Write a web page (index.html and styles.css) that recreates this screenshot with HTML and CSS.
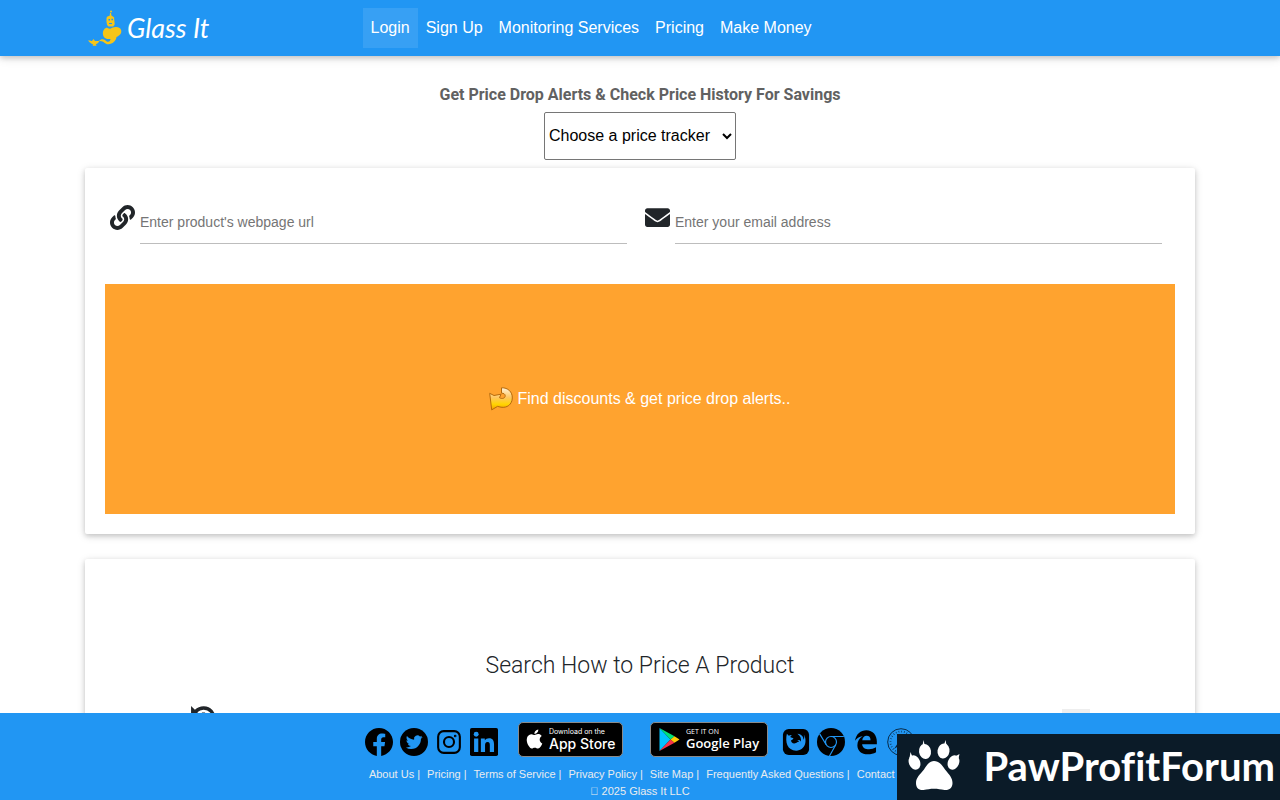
FILE: index.html
```html
<!DOCTYPE html>
<html lang="en">
<head>
<meta charset="utf-8">
<meta name="viewport" content="width=device-width, initial-scale=1">
<title>Glass It - Price Drop Alerts</title>
<link rel="stylesheet" href="styles.css">
</head>
<body>
<header class="navbar">
  <div class="container navbar-inner">
    <a class="brand" href="#">
      <svg class="genie" viewBox="0 0 36 36" fill="#f5c518" aria-hidden="true">
        <circle cx="23" cy="1.500" r="1"/><path d="M22 3h1l.6 3h-2z"/>
        <path d="M18.500 8c.5-2.500 6-3 7.500-.5l.7 6.500c-.5 2-1.500 2.500-2.500 2.500h-3.500c-1.500-.5-2.500-3-2.200-8.500z"/>
        <path d="M19 17.500c1 1 3 1.800 5 .3 3-1.300 8-1.500 9 2 1.300 3.500-1.500 6-4.500 7.200-.5 4-4 7-8 7.300-4 .2-4-3.800-9.500-3.300 2-2.500 5.500-2.200 7.500.3 2 1.400 4-.2 4-2.300-3 .5-6.500-.5-7.300-3.500-1-4 .5-7 3.800-8z"/>
        <path d="M0 30.500c2-.4 3 .3 4 .5l1.500-2 1.500 2h4.500c-1.500 2.500-2.800 3-3.800 3.400l1 1.300H4.500l.8-1.300C3.500 34 1.800 32.500 0 30.500z"/>
        <path d="M20.500 9h1.500v1.400h-1.500zM23.500 8.800h1.500v1.400h-1.500zM21 13h3v1h-3z" fill="#2196f3"/>
      </svg>
      <span class="brand-name">Glass It</span>
    </a>
    <nav class="nav">
      <a class="nav-link active" href="#">Login</a>
      <a class="nav-link" href="#">Sign Up</a>
      <a class="nav-link" href="#">Monitoring Services</a>
      <a class="nav-link" href="#">Pricing</a>
      <a class="nav-link" href="#">Make Money</a>
    </nav>
  </div>
</header>

<main class="container page">
  <div class="intro">
    <h1 class="title">Get Price Drop Alerts &amp; Check Price History For Savings</h1>
    <select class="tracker" aria-label="Choose a price tracker"><option>Choose a price tracker</option></select>
  </div>

  <form class="card">
    <div class="fields">
      <div class="field">
        <label for="url" aria-label="Product url"><svg class="field-icon" viewBox="0 0 512 512" aria-hidden="true"><path d="M326.612 185.391c59.747 59.809 58.927 155.698.36 214.590-.11.12-.24.25-.36.37l-67.200 67.200c-59.270 59.270-155.699 59.262-214.960 0-59.270-59.260-59.270-155.700 0-214.960l37.106-37.106c9.840-9.840 26.786-3.300 27.294 10.606.648 17.722 3.826 35.527 9.690 52.721 1.986 5.822.567 12.262-3.783 16.612l-13.087 13.087c-28.026 28.026-28.905 73.660-1.155 101.960 28.024 28.579 74.086 28.749 102.325.51l67.200-67.190c28.191-28.191 28.073-73.757 0-101.830-3.701-3.694-7.429-6.564-10.341-8.569a16.037 16.037 0 0 1-6.947-12.606c-.396-10.567 3.348-21.456 11.698-29.806l21.054-21.055c5.521-5.521 14.182-6.199 20.584-1.731a152.482 152.482 0 0 1 20.522 17.197zM467.547 44.449c-59.261-59.262-155.690-59.270-214.960 0l-67.200 67.200c-.12.12-.25.25-.36.37-58.566 58.892-59.387 154.781.36 214.590a152.454 152.454 0 0 0 20.521 17.196c6.402 4.468 15.064 3.789 20.584-1.731l21.054-21.055c8.350-8.350 12.094-19.239 11.698-29.806a16.037 16.037 0 0 0-6.947-12.606c-2.912-2.005-6.640-4.875-10.341-8.569-28.073-28.073-28.191-73.639 0-101.830l67.200-67.190c28.239-28.239 74.300-28.069 102.325.51 27.750 28.300 26.872 73.934-1.155 101.960l-13.087 13.087c-4.350 4.350-5.769 10.790-3.783 16.612 5.864 17.194 9.042 34.999 9.690 52.721.509 13.906 17.454 20.446 27.294 10.606l37.106-37.106c59.271-59.259 59.271-155.699.001-214.959z"/></svg></label>
        <input class="text-input" id="url" type="text" placeholder="Enter product's webpage url">
      </div>
      <div class="field">
        <label for="email" aria-label="Email"><svg class="field-icon" viewBox="0 0 512 512" aria-hidden="true"><path d="M502.300 190.800c3.900-3.100 9.700-.2 9.700 4.700V400c0 26.500-21.500 48-48 48H48c-26.500 0-48-21.500-48-48V195.600c0-5 5.700-7.800 9.700-4.700 22.400 17.400 52.100 39.500 154.100 113.600 21.100 15.400 56.700 47.800 92.200 47.600 35.700.3 72-32.800 92.300-47.600 102-74.100 131.600-96.300 154-113.700zM256 320c23.200.4 56.600-29.200 73.400-41.400 132.700-96.300 142.800-104.700 173.400-128.700 5.800-4.500 9.200-11.500 9.200-18.900v-19c0-26.500-21.500-48-48-48H48c-26.500 0-48 21.500-48 48v19c0 7.400 3.400 14.300 9.200 18.900 30.600 23.900 40.700 32.400 173.400 128.700 16.800 12.200 50.200 41.800 73.400 41.400z"/></svg></label>
        <input class="text-input" id="email" type="email" placeholder="Enter your email address">
      </div>
    </div>
    <button class="submit" type="button">
      <svg class="arrow" viewBox="0 0 24 24" aria-hidden="true">
        <defs><linearGradient id="gold" x1="0" y1="0" x2="0" y2="1"><stop offset="0" stop-color="#fff3d9"/><stop offset=".45" stop-color="#ffc65c"/><stop offset=".75" stop-color="#ffd400"/><stop offset="1" stop-color="#f39a00"/></linearGradient></defs>
        <path d="M12.500.8C19 .5 23.500 5 23.300 11c-.2 6.500-5.300 10.200-11.300 9.200l-3.500-.8-5.800 3.500L.7 6.300l4.300 2.200 7-1.300-1.500 3.500c2.500 1.600 5.800.6 5.700-2-.1-1.600-1.500-2.500-3.700-2.500z" fill="url(#gold)" stroke="#b56a0c" stroke-linejoin="round"/>
      </svg>
      <span>Find discounts &amp; get price drop alerts..</span>
    </button>
  </form>

  <section class="card search">
    <h2 class="search-title">Search How to Price A Product</h2>
    <div class="search-row">
      <svg class="history" viewBox="0 0 512 512" aria-hidden="true"><path d="M20 20v175h175l-56-56a165 165 0 1 1-20 205l-52 38A230 230 0 1 0 93 92zM226 140v135l90 65 34-46-64-47V140z"/></svg>
      <button class="search-btn" type="button" aria-label="Search"></button>
    </div>
  </section>
</main>

<footer class="footer">
  <div class="footer-icons">
    <div class="icon-group">
      <a href="#" aria-label="Facebook"><svg class="social" viewBox="0 0 24 24"><path d="M24 12.073c0-6.627-5.373-12-12-12s-12 5.373-12 12c0 5.990 4.388 10.954 10.125 11.854v-8.385H7.078v-3.470h3.047V9.430c0-3.007 1.792-4.669 4.533-4.669 1.312 0 2.686.235 2.686.235v2.953H15.830c-1.491 0-1.956.925-1.956 1.874v2.250h3.328l-.532 3.470h-2.796v8.385C19.612 23.027 24 18.062 24 12.073z"/></svg></a>
      <a href="#" aria-label="Twitter"><svg class="social" viewBox="0 0 24 24"><circle cx="12" cy="12" r="12"/><path fill="#2196f3" transform="translate(5 5) scale(.6)" d="M23.953 4.570a10 10 0 01-2.825.775 4.958 4.958 0 002.163-2.723c-.951.555-2.005.959-3.127 1.184a4.920 4.920 0 00-8.384 4.482C7.690 8.095 4.067 6.130 1.640 3.162a4.822 4.822 0 00-.666 2.475c0 1.710.87 3.213 2.188 4.096a4.904 4.904 0 01-2.228-.616v.06a4.923 4.923 0 003.946 4.827 4.996 4.996 0 01-2.212.085 4.936 4.936 0 004.604 3.417 9.867 9.867 0 01-6.102 2.105c-.39 0-.779-.023-1.170-.067a13.995 13.995 0 007.557 2.209c9.053 0 13.998-7.496 13.998-13.985 0-.21 0-.42-.015-.63A9.935 9.935 0 0024 4.590z"/></svg></a>
      <a href="#" aria-label="Instagram"><svg class="social" viewBox="0 0 24 24" fill="none" stroke="#000" stroke-width="1.800"><rect x="2.700" y="2.700" width="18.600" height="18.600" rx="4.800"/><circle cx="12" cy="12" r="4.300"/><circle cx="17.300" cy="6.900" r=".4" stroke-width="1.400"/></svg></a>
      <a href="#" aria-label="LinkedIn"><svg class="social" viewBox="0 0 24 24"><rect width="24" height="24" rx="1.500"/><g fill="#2196f3"><circle cx="5.300" cy="5.300" r="2.100"/><path d="M3.500 9h3.600v11.500H3.500zM9.300 9h3.400v1.600c.8-1.300 2-1.900 3.600-1.900 3.400 0 4.300 2.200 4.300 5.500v6.300H17v-5.600c0-1.700-.2-3-1.900-3-1.800 0-2.200 1.400-2.200 3v5.600H9.300z"/></g></svg></a>
    </div>
    <a class="badge apple" href="#">
      <svg class="apple-logo" viewBox="0 0 24 24" fill="#fff" aria-hidden="true"><path d="M12.152 6.896c-.948 0-2.415-1.078-3.960-1.040-2.040.027-3.910 1.183-4.961 3.014-2.117 3.675-.546 9.103 1.519 12.090 1.013 1.454 2.208 3.090 3.792 3.039 1.520-.065 2.090-.987 3.935-.987 1.831 0 2.350.987 3.960.948 1.637-.026 2.676-1.480 3.676-2.948 1.156-1.688 1.636-3.325 1.662-3.415-.039-.013-3.182-1.221-3.220-4.857-.026-3.040 2.480-4.494 2.597-4.559-1.429-2.090-3.623-2.324-4.390-2.376-2-.156-3.675 1.090-4.610 1.090zM15.530 3.830c.843-1.012 1.400-2.427 1.245-3.830-1.207.052-2.662.805-3.532 1.818-.78.896-1.454 2.338-1.273 3.714 1.338.104 2.715-.688 3.559-1.701"/></svg>
      <span class="badge-text"><small>Download on the</small><b>App Store</b></span>
    </a>
    <a class="badge google" href="#">
      <svg class="play-logo" viewBox="0 0 20 23" aria-hidden="true"><path d="M0 0v23l11-11.500z" fill="#00c3ff"/><path d="M0 0l15 8.200-4 3.300z" fill="#00e27a"/><path d="M0 23l15-8.200-4-3.300z" fill="#f5334a"/><path d="M15 8.200l5 3.300-5 3.300-4-3.300z" fill="#ffcb05"/></svg>
      <span class="badge-text"><small>GET IT ON</small><b>Google Play</b></span>
    </a>
    <div class="icon-group">
      <a href="#" aria-label="Firefox"><svg class="social" viewBox="0 0 24 24"><rect x=".8" y=".8" width="22.400" height="22.400" rx="5"/><path fill="#2196f3" d="M4.200 5l1.600 1.600c1-.7 2-.8 2.800-.6-1 .6-1.500 1.200-1.300 2l2.500.7c-.2 1-1.200 1.200-2 1.800-.2 2.300 2 3.200 4.200 2.400 1.300-.5 1.700-1.200 2.700-1.300-.3-.8-1.200-1-2.200-.6 1.500-1.300 3.200-.5 3.600.7.700-2.500-.4-5-2.900-6.700 4 .3 5.200 3 5.300 5 .7-1 .8-2.500.2-4.200 3 4.500 1.700 13.200-6.500 13.600C4.500 19.400 2.500 12 4.200 5z"/></svg></a>
      <a href="#" aria-label="Chrome"><svg class="social" viewBox="0 0 24 24"><circle cx="12" cy="12" r="12"/><g fill="none" stroke="#2196f3"><circle cx="12" cy="12" r="4.700"/><path d="M12 7.300h11M7.900 14.300L2.300 5M16.100 14.300L10.700 24"/></g></svg></a>
      <a href="#" aria-label="Edge"><svg class="social" viewBox="0 0 24 24"><path d="M2.600 11C3.600 5 7.500 2 12.300 2c5.700 0 9 4.500 9 9.500v2.400H8.700c.2 3 2.800 4.400 5.900 4.400 2.200 0 4.200-.6 6-1.700v4.200c-2 1.200-4.500 1.800-7 1.800-5.500 0-9-3-9-7.800 0-3.500 1.700-6.300 4.700-7.800-3.300.5-5.500 1.800-6.700 4zm6.200-.6h7.100c0-2.500-1.200-3.700-3.400-3.700-2 0-3.400 1.400-3.700 3.700z"/></svg></a>
      <a href="#" aria-label="Safari"><svg class="social" viewBox="0 0 24 24"><g fill="none" stroke="#06243d"><circle cx="12" cy="12" r="11.400" stroke-width=".8"/><circle cx="12" cy="12" r="9" stroke-width="1.500" stroke-dasharray=".5 1.856"/></g><path fill="#06243d" d="M18 6l-4.800 7.200L6 18l4.800-7.200z"/></svg></a>
    </div>
  </div>
  <div class="footer-links">
    <span><a href="#">About Us</a> |</span>
    <span><a href="#">Pricing</a> |</span>
    <span><a href="#">Terms of Service</a> |</span>
    <span><a href="#">Privacy Policy</a> |</span>
    <span><a href="#">Site Map</a> |</span>
    <span><a href="#">Frequently Asked Questions</a> |</span>
    <span><a href="#">Contact Us</a></span>
  </div>
  <div class="copyright">&#xf1f9; 2025 Glass It LLC</div>
</footer>

<aside class="watermark">
  <svg class="paw" viewBox="0 0 52 50" fill="#fff" aria-hidden="true">
    <path d="M26 21c5 0 8 4 11 8.500 4 5 7.500 8 7.500 13.500 0 5-3.500 7.500-8 7-4-.5-6.500-1.200-10.500-1.200S19.500 49.500 15.500 50c-4.500.5-7.500-2-7.500-7 0-5.500 4-8.500 8-13.500C19 25 21.500 21 26 21z"/>
    <ellipse cx="17" cy="11.500" rx="6" ry="7.500" transform="rotate(-8 17 11.500)"/><ellipse cx="35.500" cy="11" rx="6" ry="7.500" transform="rotate(8 35.500 11)"/>
    <ellipse cx="6.500" cy="22.500" rx="5.600" ry="7.400" transform="rotate(-24 6.500 22.500)"/><ellipse cx="45.500" cy="22.500" rx="5.600" ry="7.400" transform="rotate(24 45.500 22.500)"/>
    <path d="M14.500 5.500L15.600 0l1 5zM36 5L37.500 0l1 5zM1.500 18L2.500 12l2 5zM47 16.500l4.500-2.500-1 4.500z"/>
  </svg>
  <span class="watermark-name">PawProfitForum</span>
</aside>
</body>
</html>
```
FILE: styles.css
```css
*, *::before, *::after { box-sizing: border-box; }
body {
  margin: 0;
  font-family: "Liberation Sans", Arial, sans-serif;
  font-size: 16px;
  line-height: 24px;
  color: #212529;
  background: #fff;
}
a { color: inherit; text-decoration: none; }
svg { display: block; }
.container { width: 100%; max-width: 1110px; margin: 0 auto; }

.navbar {
  position: sticky;
  top: 0;
  z-index: 10;
  background: #2196f3;
  color: #fff;
  box-shadow: 0 2px 5px rgba(0, 0, 0, .16), 0 2px 10px rgba(0, 0, 0, .12);
}
.navbar-inner { display: grid; grid-template-columns: 1fr 3fr; align-items: center; min-height: 56px; }
.brand { display: flex; align-items: center; gap: 3px; padding-left: 3px; }
.genie { width: 36px; height: 36px; }
.brand-name { font: italic 27px/36px "Lato", cursive; }
.nav { display: flex; }
.nav-link { padding: 8px; white-space: nowrap; }
.nav-link.active { background: rgba(255, 255, 255, .1); }

.page { display: flex; flex-direction: column; padding: 27px 0 120px; }
.intro { display: flex; flex-direction: column; align-items: center; gap: 5px; margin-bottom: 8px; }
.title { margin: 0; font: 700 16px/24px Roboto, sans-serif; color: #616161; }
.tracker {
  width: 192px;
  height: 48px;
  padding-bottom: 2px;
  font: 16px "Liberation Sans", Arial, sans-serif;
  color: #000;
  background: #fff;
  border: 1px solid #767676;
  border-radius: 2px;
}

.card {
  padding: 20px;
  background: #fff;
  border-radius: 2px;
  box-shadow: 0 2px 5px rgba(0, 0, 0, .16), 0 2px 10px rgba(0, 0, 0, .12);
}
.fields { display: grid; grid-template-columns: 1fr 1fr; padding: 12px 0 40px; }
.field { display: flex; align-items: flex-start; gap: 5px; padding: 0 13px 0 5px; }
.field-icon { width: 25px; height: 25px; margin-top: 5px; fill: #212529; }
.text-input {
  flex: 1;
  min-width: 0;
  height: 44px;
  padding: 0;
  font: 14px "Liberation Sans", Arial, sans-serif;
  border: 0;
  border-bottom: 1px solid #bdbdbd;
  background: transparent;
  outline: 0;
}
.text-input::placeholder { color: #757575; opacity: 1; }
.submit {
  display: flex;
  align-items: center;
  justify-content: center;
  gap: 4px;
  width: 100%;
  min-height: 230px;
  border: 0;
  background: #ffa32f;
  color: #fff;
  font: 16px/24px "Liberation Sans", Arial, sans-serif;
}
.arrow { width: 24px; height: 24px; }

.search { margin-top: 25px; padding: 92px 105px 40px; }
.search-title { margin: 0; font: 300 23px/30px Roboto, sans-serif; text-align: center; }
.search-row { display: flex; justify-content: space-between; align-items: flex-start; margin-top: 24px; }
.history { width: 27px; height: 27px; fill: #212529; }
.search-btn { width: 28px; height: 32px; margin-top: 4px; border: 0; background: #eee; }

.footer {
  position: fixed;
  left: 0;
  right: 0;
  bottom: 0;
  z-index: 10;
  padding: 9px 0 0;
  background: #2196f3;
  color: #e9ecef;
  font-size: 11px;
  line-height: 17px;
  text-align: center;
}
.footer-icons { display: flex; justify-content: center; align-items: center; height: 34px; margin-bottom: 10px; }
.icon-group { display: flex; gap: 7px; margin-top: 5px; }
.social { width: 28px; height: 28px; }
.badge {
  display: flex;
  align-items: center;
  height: 35px;
  border: 1px solid #8a8a8a;
  border-radius: 5px;
  background: #000;
  color: #fff;
  font-family: Inter, sans-serif;
  text-align: left;
  white-space: nowrap;
}
.apple { width: 105px; gap: 5px; margin: 0 27px 0 20px; padding-left: 6px; }
.google { width: 118px; gap: 6px; margin: 0 14px 0 0; padding-left: 8px; font-family: "Open Sans", sans-serif; }
.apple-logo { width: 19px; height: 20px; }
.play-logo { width: 21px; height: 23px; }
.badge-text { display: flex; flex-direction: column; }
.badge-text small { font-size: 7px; line-height: 9px; }
.badge-text b { font-size: 14px; font-weight: 500; line-height: 15px; }
.google .badge-text b { font-size: 13px; font-weight: 600; }
.footer-links { display: flex; justify-content: center; gap: 7px; white-space: nowrap; }

.watermark {
  position: fixed;
  right: 0;
  bottom: 0;
  z-index: 20;
  display: flex;
  align-items: center;
  gap: 23px;
  height: 66px;
  padding: 0 5px 0 11px;
  background: #0b1b28;
  color: #fff;
}
.paw { width: 52px; height: 50px; margin-bottom: 4px; }
.watermark-name { font: 700 40px/62px Lato, sans-serif; font-variant-ligatures: none; padding-bottom: 3px; }
```
